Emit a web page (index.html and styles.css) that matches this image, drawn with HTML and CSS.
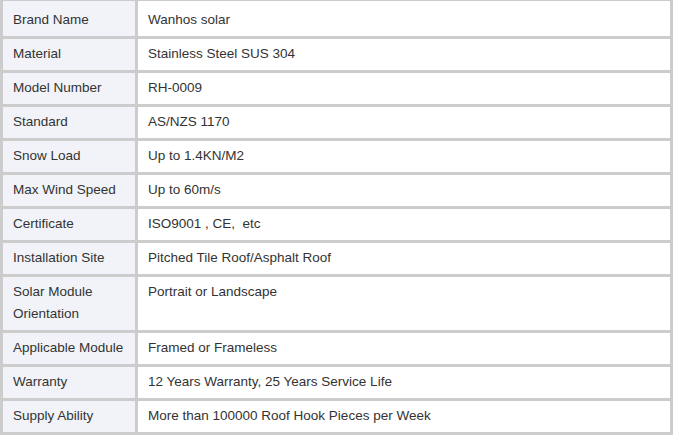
FILE: index.html
```html
<!DOCTYPE html>
<html>
<head>
<meta charset="utf-8">
<link rel="stylesheet" href="styles.css">
</head>
<body>
<table class="spec">
  <tbody>
    <tr class="first"><td class="label">Brand Name</td><td class="value">Wanhos solar</td></tr>
    <tr><td class="label">Material</td><td class="value">Stainless Steel SUS 304</td></tr>
    <tr><td class="label">Model Number</td><td class="value">RH-0009</td></tr>
    <tr><td class="label">Standard</td><td class="value">AS/NZS 1170</td></tr>
    <tr><td class="label">Snow Load</td><td class="value">Up to 1.4KN/M2</td></tr>
    <tr><td class="label">Max Wind Speed</td><td class="value">Up to 60m/s</td></tr>
    <tr><td class="label">Certificate</td><td class="value">ISO9001 , CE,&nbsp; etc</td></tr>
    <tr><td class="label">Installation Site</td><td class="value">Pitched Tile Roof/Asphalt Roof</td></tr>
    <tr><td class="label">Solar Module Orientation</td><td class="value">Portrait or Landscape</td></tr>
    <tr><td class="label">Applicable Module</td><td class="value">Framed or Frameless</td></tr>
    <tr><td class="label">Warranty</td><td class="value">12 Years Warranty, 25 Years Service Life</td></tr>
    <tr><td class="label">Supply Ability</td><td class="value">More than 100000 Roof Hook Pieces per Week</td></tr>
    <tr><td class="label">&nbsp;</td><td class="value">&nbsp;</td></tr>
  </tbody>
</table>
</body>
</html>
```
FILE: styles.css
```css
html, body {
  margin: 0;
  padding: 0;
  background: #ffffff;
  overflow: hidden;
}
.spec {
  margin-top: -2px;
  width: 673px;
  border-collapse: separate;
  border-spacing: 3px;
  background: #cccccc;
  font-family: "Liberation Sans", Arial, sans-serif;
  font-size: 13.5px;
  color: #333333;
}
.spec td {
  padding: 4px 9px 5px 10px;
  line-height: 22px;
  vertical-align: top;
  text-align: left;
}
.spec .first td {
  padding-top: 8px;
}
.spec .label {
  width: 113px;
  background: #f1f3f8;
}
.spec .value {
  background: #ffffff;
}
```
